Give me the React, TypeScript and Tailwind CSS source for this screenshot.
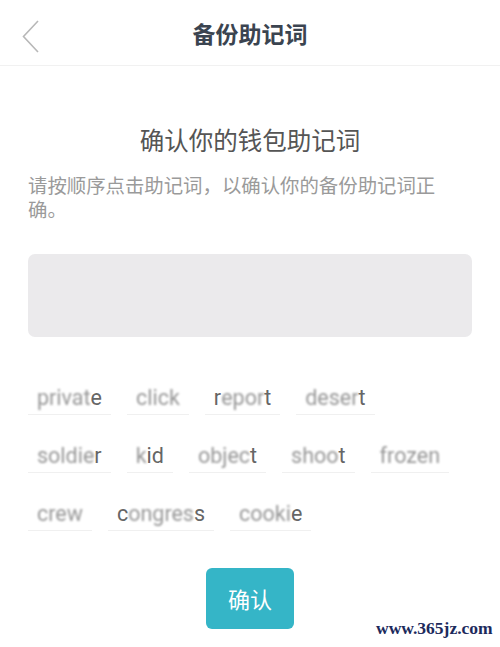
import React from "react";

type Part = { t: string; b?: boolean };
const rows: Part[][][] = [
  [
    [{ t: "privat", b: true }, { t: "e" }],
    [{ t: "click", b: true }],
    [{ t: "r" }, { t: "epor", b: true }, { t: "t" }],
    [{ t: "deser", b: true }, { t: "t" }],
  ],
  [
    [{ t: "soldie", b: true }, { t: "r" }],
    [{ t: "k", b: true }, { t: "id" }],
    [{ t: "objec", b: true }, { t: "t" }],
    [{ t: "shoo", b: true }, { t: "t" }],
    [{ t: "frozen", b: true }],
  ],
  [
    [{ t: "crew", b: true }],
    [{ t: "c" }, { t: "ongres", b: true }, { t: "s" }],
    [{ t: "c", b: true }, { t: "ooki", b: true }, { t: "e" }],
  ],
];

const cjk = { fontFamily: '"Noto Sans CJK SC", "Noto Sans", sans-serif' };

export default function App() {
  return (
    <div className="relative w-[500px] h-[647px] bg-white overflow-hidden" style={cjk}>
      <div className="relative h-[66px] flex items-center justify-center border-b border-[#f1f1f1]">
        <svg className="absolute left-[21px] top-[19px]" width="19" height="35" viewBox="0 0 19 35">
          <path d="M17 2 L2.5 17.5 L17 33" fill="none" stroke="#b8b8b8" strokeWidth="1.6" />
        </svg>
        <span className="text-[23px] font-bold text-[#3b4450] leading-none mt-[1px]">备份助记词</span>
      </div>

      <div className="px-[28px]">
        <h2 className="mt-[58px] text-center text-[24.5px] leading-[32px] text-[#555]">确认你的钱包助记词</h2>
        <p className="mt-[17px] w-[422px] text-[19.4px] leading-[24px] text-[#9a9a9a]">
          请按顺序点击助记词，以确认你的备份助记词正确。
        </p>
        <div className="mt-[33px] h-[83px] rounded-[7px] bg-[#ebeaec]" />

        <div className="mt-[46px] flex flex-col gap-[26px]">
          {rows.map((row, i) => (
            <div key={i} className="flex gap-[16px]">
              {row.map((w, j) => (
                <div
                  key={j}
                  className="h-[32px] px-[9px] flex items-center border-b border-[#f0f0f0] text-[21.5px] text-[#666]"
                  style={{ fontFamily: "Roboto, sans-serif" }}
                >
                  {w.map((p, k) =>
                    p.b ? (
                      <span key={k} className="inline-block blur-[1.3px] text-[#979797]">
                        {p.t}
                      </span>
                    ) : (
                      <span key={k}>{p.t}</span>
                    )
                  )}
                </div>
              ))}
            </div>
          ))}
        </div>

        <div className="mt-[37px] flex justify-center">
          <button className="w-[88px] h-[61px] rounded-[6px] bg-[#35b5c7] text-white text-[22px]">确认</button>
        </div>
      </div>

      <span
        className="absolute left-[376px] top-[615px] text-[17.5px] font-bold text-[#1c2a5c]"
        style={{ fontFamily: '"Liberation Serif", serif' }}
      >
        www.365jz.com
      </span>
    </div>
  );
}
